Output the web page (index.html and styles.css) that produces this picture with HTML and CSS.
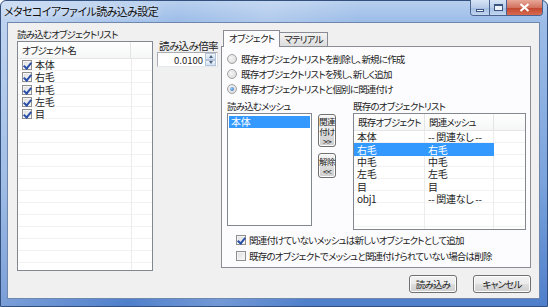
FILE: index.html
```html
<!DOCTYPE html>
<html lang="ja">
  <head>
    <meta charset="UTF-8" />
    <title>メタセコイアファイル読み込み設定</title>
    <link rel="stylesheet" href="styles.css">
  </head>
  <body>
    <div class="window">
      <div class="titlebar">
        <span class="title">メタセコイアファイル読み込み設定</span>
        <div class="caption-buttons">
          <span class="cap cap-min"><i></i></span>
          <span class="cap cap-max"><i></i></span>
          <span class="cap cap-close">
            <svg width="11" height="9" viewBox="0 0 11 9">
              <path d="M1.5 1 L9.5 8 M9.5 1 L1.5 8" stroke="#fff" stroke-width="2.2" />
            </svg>
          </span>
        </div>
      </div>

      <div class="client">
        <!-- object list -->
        <div class="col-objects">
          <div class="label">読み込むオブジェクトリスト</div>
          <div class="listview obj-list">
            <div class="lv-header">
              <span class="lv-col obj-name">オブジェクト名</span>
              <span class="lv-col lv-rest"></span>
            </div>
            <div class="lv-body">
              <div class="lv-row"><span class="check on"></span>本体</div>
              <div class="lv-row"><span class="check on"></span>右毛</div>
              <div class="lv-row"><span class="check on"></span>中毛</div>
              <div class="lv-row"><span class="check on"></span>左毛</div>
              <div class="lv-row"><span class="check on"></span>目</div>
            </div>
          </div>
        </div>

        <!-- scale -->
        <div class="col-scale">
          <div class="label">読み込み倍率</div>
          <div class="spin">
            <span class="spin-value">0.0100</span>
            <span class="spin-btns">
              <span class="spin-up"></span>
              <span class="spin-down"></span>
            </span>
          </div>
        </div>

        <!-- tabs -->
        <div class="col-tabs">
          <div class="tabs">
            <span class="tab active">オブジェクト</span>
            <span class="tab">マテリアル</span>
          </div>
          <div class="tab-panel">
            <div class="radio-row"><span class="radio"></span>既存オブジェクトリストを削除し、新規に作成</div>
            <div class="radio-row"><span class="radio"></span>既存オブジェクトリストを残し、新しく追加</div>
            <div class="radio-row"><span class="radio on"></span>既存オブジェクトリストと個別に関連付け</div>

            <div class="assoc">
              <div class="mesh-col">
                <div class="label">読み込むメッシュ</div>
                <div class="listbox">
                  <div class="lb-item selected">本体</div>
                </div>
              </div>
              <div class="assoc-btns">
                <button class="btn btn-link">関連<br>付け<br>&gt;&gt;</button>
                <button class="btn btn-unlink">解除<br>&lt;&lt;</button>
              </div>
              <div class="exist-col">
                <div class="label">既存のオブジェクトリスト</div>
                <div class="listview exist-list">
                  <div class="lv-header">
                    <span class="lv-col ex-obj">既存オブジェクト</span>
                    <span class="lv-col ex-mesh">関連メッシュ</span>
                    <span class="lv-col lv-rest"></span>
                  </div>
                  <div class="lv-body">
                    <div class="lv-row"><span class="ex-obj">本体</span><span class="ex-mesh">-- 関連なし --</span></div>
                    <div class="lv-row selected"><span class="ex-obj">右毛</span><span class="ex-mesh">右毛</span></div>
                    <div class="lv-row"><span class="ex-obj">中毛</span><span class="ex-mesh">中毛</span></div>
                    <div class="lv-row"><span class="ex-obj">左毛</span><span class="ex-mesh">左毛</span></div>
                    <div class="lv-row"><span class="ex-obj">目</span><span class="ex-mesh">目</span></div>
                    <div class="lv-row"><span class="ex-obj">obj1</span><span class="ex-mesh">-- 関連なし --</span></div>
                  </div>
                </div>
              </div>
            </div>

            <div class="check-row"><span class="check on"></span>関連付けていないメッシュは新しいオブジェクトとして追加</div>
            <div class="check-row"><span class="check"></span>既存のオブジェクトでメッシュと関連付けられていない場合は削除</div>
          </div>

          <div class="dialog-buttons">
            <button class="btn btn-ok">読み込み</button>
            <button class="btn btn-cancel">キャンセル</button>
          </div>
        </div>
      </div>
    </div>
  </body>
</html>
```

FILE: styles.css
```css
* {
  box-sizing: border-box;
}

body {
  margin: 0;
  font-family: "Noto Sans CJK JP", "Noto Sans", sans-serif;
  font-size: 9.5px;
  letter-spacing: -0.8px;
  font-feature-settings: "palt";
  color: #222;
  background: #fff;
}

.window {
  width: 548px;
  height: 307px;
  display: flex;
  flex-direction: column;
  border: 1px solid #34507e;
  border-radius: 6px 6px 0 0;
  background:
    linear-gradient(100deg, rgba(255, 255, 255, 0.35) 0, rgba(255, 255, 255, 0) 30%, rgba(255, 255, 255, 0.2) 45%, rgba(255, 255, 255, 0) 60%),
    linear-gradient(180deg, #b7cfee 0, #9dbde8 20px, #7aa3dc 60%, #4f7fcb 100%);
}

/* title bar */
.titlebar {
  height: 21px;
  display: flex;
  justify-content: space-between;
  align-items: flex-start;
  padding-left: 3px;
}

.title {
  font-size: 11px;
  letter-spacing: -0.6px;
  line-height: 20px;
  color: #111;
  text-shadow: 0 0 6px rgba(255, 255, 255, 0.9);
}

.caption-buttons {
  display: flex;
  margin-right: 4px;
  margin-top: -1px;
  border: 1px solid #4a6591;
  border-top: none;
  border-radius: 0 0 4px 4px;
  overflow: hidden;
  height: 16px;
}

.cap {
  display: flex;
  align-items: center;
  justify-content: center;
  height: 100%;
  background: linear-gradient(#d7e4f4 0, #b9cde9 50%, #a3bde2 51%, #c3d6ef 100%);
}

.cap-min {
  width: 19px;
  border-right: 1px solid #4a6591;
}

.cap-min i {
  width: 8px;
  height: 3px;
  margin-top: 5px;
  background: #fff;
  border: 1px solid #3b5480;
}

.cap-max {
  width: 17px;
  border-right: 1px solid #4a6591;
}

.cap-max i {
  width: 9px;
  height: 7px;
  border: 1px solid #3b5480;
  border-top-width: 2px;
  background: #eef3fa;
}

.cap-close {
  width: 35px;
  background: linear-gradient(#e8a898 0, #d2735f 50%, #c1452e 51%, #d86a50 100%);
}

/* client area */
.client {
  flex: 1;
  display: flex;
  margin: 0 7px 7px 6px;
  padding: 5px 8px 0 9px;
  background: #f0f0f0;
  border: 1px solid #6f86ad;
}

.label {
  line-height: 13px;
  white-space: nowrap;
}

/* left object list */
.col-objects {
  width: 138px;
  display: flex;
  flex-direction: column;
}

.listview {
  border: 1px solid #828790;
  background: #fff;
  display: flex;
  flex-direction: column;
}

.obj-list {
  height: 230px;
}

.lv-header {
  display: flex;
  height: 17px;
  flex: none;
  background: linear-gradient(#ffffff, #f5f6f7);
  border-bottom: 1px solid #e5e5e5;
}

.lv-col {
  line-height: 16px;
  padding-left: 4px;
  border-right: 1px solid #e3e4e6;
  white-space: nowrap;
  overflow: hidden;
}

.lv-rest {
  flex: 1;
  border-right: none;
}

.obj-name {
  width: 113px;
}

.lv-body {
  flex: 1;
  background:
    repeating-linear-gradient(180deg, transparent 0, transparent 11px, #f2f2f2 11px, #f2f2f2 12px);
}

.obj-list .lv-body {
  background:
    linear-gradient(90deg, transparent 113px, #ececec 113px, #ececec 114px, transparent 114px),
    repeating-linear-gradient(180deg, transparent 0, transparent 11px, #f2f2f2 11px, #f2f2f2 12px);
}

.lv-row {
  height: 12px;
  line-height: 12px;
  display: flex;
  align-items: center;
  white-space: nowrap;
}

.obj-list .lv-row {
  padding-left: 4px;
  height: 12.3px;
  font-size: 10px;
  letter-spacing: -0.2px;
}

.obj-list .check {
  margin-right: 3px;
}

/* checkboxes & radios */
.check {
  width: 10px;
  height: 10px;
  flex: none;
  border: 1px solid #8f8f8f;
  background: linear-gradient(135deg, #dcdcdc, #fbfbfb);
  box-shadow: inset 0 0 0 1px #f4f4f4;
  position: relative;
}

.check.on::after {
  content: "";
  position: absolute;
  left: 2px;
  top: 0;
  width: 3px;
  height: 6px;
  border: solid #2a4fa8;
  border-width: 0 2px 2px 0;
  transform: rotate(40deg);
}

.radio {
  width: 10px;
  height: 10px;
  flex: none;
  border-radius: 50%;
  border: 1px solid #a2a2a2;
  background: radial-gradient(circle at 40% 40%, #f6f6f6 0, #d5d5d5 100%);
  margin-right: 4px;
  position: relative;
}

.radio.on::after {
  content: "";
  position: absolute;
  left: 2px;
  top: 2px;
  width: 4px;
  height: 4px;
  border-radius: 50%;
  background: radial-gradient(circle at 35% 35%, #9ed0f8, #2a62c2);
}

/* scale */
.col-scale {
  width: 61px;
  margin-left: 4px;
  padding-top: 11px;
}

.col-scale .label {
  font-size: 10.5px;
  letter-spacing: -0.6px;
  padding-left: 2px;
}

.spin {
  height: 15px;
  display: flex;
  align-items: center;
  justify-content: flex-end;
  border: 1px solid #abadb3;
  border-right-color: #dbdfe6;
  border-bottom-color: #e3e9ef;
  background: #fff;
}

.spin-value {
  line-height: 12px;
  letter-spacing: 0;
  margin-right: 2px;
}

.spin-btns {
  width: 11px;
  height: 13px;
  display: flex;
  flex-direction: column;
  margin-right: 1px;
}

.spin-btns span {
  flex: 1;
  display: flex;
  align-items: center;
  justify-content: center;
  border: 1px solid #b6c4d9;
  background: linear-gradient(#eef4fb, #d3e1f1);
}

.spin-up::after {
  content: "";
  border: 2.5px solid transparent;
  border-bottom: 3px solid #4d6185;
  border-top: none;
}

.spin-down::after {
  content: "";
  border: 2.5px solid transparent;
  border-top: 3px solid #4d6185;
  border-bottom: none;
}

/* tabs */
.col-tabs {
  width: 310px;
  margin-left: 3px;
  padding-top: 2px;
  display: flex;
  flex-direction: column;
}

.tabs {
  display: flex;
  align-items: flex-end;
  height: 17px;
  padding-left: 2px;
  position: relative;
  z-index: 1;
}

.tab {
  height: 14px;
  line-height: 13px;
  padding: 0 4px;
  border: 1px solid #898c95;
  border-bottom: none;
  background: linear-gradient(#f3f3f3, #dddddd);
  margin-bottom: 1px;
}

.tab.active {
  height: 17px;
  line-height: 15px;
  padding: 0 5px;
  background: #fcfcfe;
  margin-bottom: 0;
  margin-right: -1px;
}

.tab-panel {
  height: 222px;
  margin-top: -1px;
  border: 1px solid #898c95;
  background: #fcfcfe;
  padding: 4px 4px 0 5px;
}

.radio-row {
  height: 15px;
  display: flex;
  align-items: center;
  white-space: nowrap;
}

.assoc {
  display: flex;
  margin-top: 4px;
}

.mesh-col {
  width: 85px;
}

.listbox {
  height: 113px;
  border: 1px solid #828790;
  background: #fff;
  padding: 2px 1px;
}

.lb-item {
  height: 12px;
  line-height: 12px;
  padding-left: 2px;
  font-size: 10px;
  letter-spacing: -0.2px;
}

.selected,
.lb-item.selected {
  background: #3399ff;
  color: #fff;
}

.assoc-btns {
  width: 18px;
  margin-left: 6px;
  padding-top: 14px;
  display: flex;
  flex-direction: column;
  gap: 6px;
}

.btn {
  font: inherit;
  font-feature-settings: "palt";
  letter-spacing: inherit;
  color: #222;
  padding: 0;
  border: 1px solid #707070;
  border-radius: 3px;
  background: linear-gradient(#f2f2f2 0, #ebebeb 50%, #dddddd 51%, #cfcfcf 100%);
  box-shadow: inset 0 0 0 1px #fcfcfc;
  white-space: nowrap;
}

.btn-link,
.btn-unlink {
  font-size: 8.5px;
  line-height: 10px;
  letter-spacing: -0.6px;
  overflow: visible;
}

.btn-link {
  height: 33px;
}

.btn-unlink {
  height: 25px;
}

.exist-col {
  width: 173px;
  margin-left: 17px;
}

.exist-list {
  height: 117px;
}

.ex-obj {
  width: 71px;
  flex: none;
}

.ex-mesh {
  width: 69px;
  flex: none;
}

.exist-list .lv-row span {
  padding-left: 3px;
}

.exist-list .lv-row {
  height: 12.4px;
  font-size: 10px;
  letter-spacing: -0.3px;
}

.exist-list .lv-row.selected {
  width: 140px;
}

.exist-list .lv-body {
  background:
    linear-gradient(90deg, transparent 70px, #ececec 70px, #ececec 71px, transparent 71px, transparent 139px, #ececec 139px, #ececec 140px, transparent 140px),
    repeating-linear-gradient(180deg, transparent 0, transparent 11px, #f2f2f2 11px, #f2f2f2 12px);
}

.check-row {
  height: 16px;
  display: flex;
  align-items: center;
  padding-left: 9px;
  white-space: nowrap;
}

.check-row .check {
  margin-right: 3px;
}

.assoc + .check-row {
  margin-top: 2px;
}

.dialog-buttons {
  display: flex;
  justify-content: flex-end;
  gap: 16px;
  margin-top: 7px;
}

.btn-ok,
.btn-cancel {
  height: 18px;
  line-height: 14px;
}

.btn-ok {
  width: 48px;
}

.btn-cancel {
  width: 58px;
}
```
